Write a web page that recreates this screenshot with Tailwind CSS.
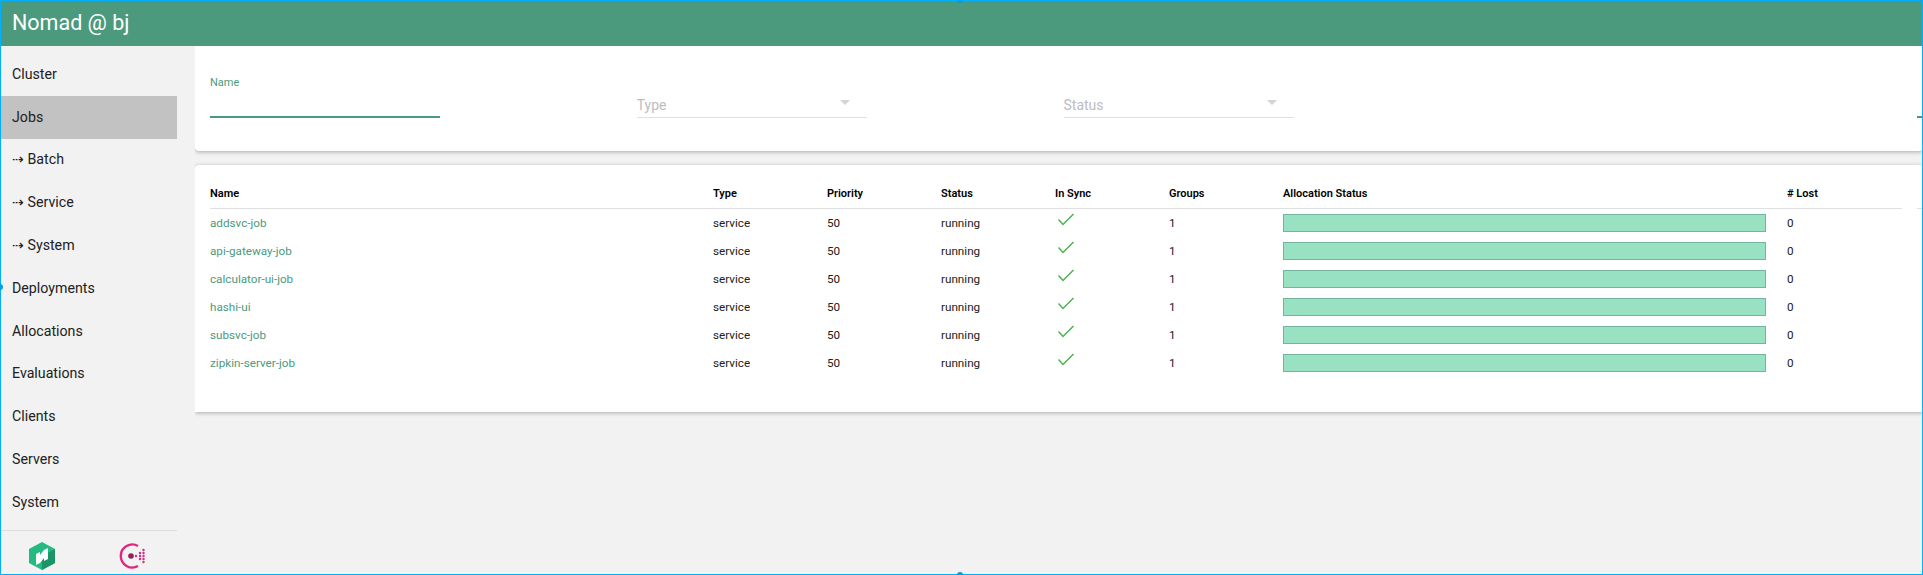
<!DOCTYPE html>
<html>
<head>
<meta charset="utf-8">
<script src="https://cdn.jsdelivr.net/npm/@tailwindcss/browser@4"></script>
</head>
<body class="relative h-[575px] w-[1923px] overflow-hidden bg-[#f2f2f2] font-['Roboto',sans-serif] text-[#212121]">
<header class="relative z-10 ml-px mt-px flex h-[45px] items-center bg-[#4b9a7d] pl-[11px] text-[21.5px] text-white">Nomad @ bj</header>
<div class="flex h-[529px]">
  <nav class="ml-px flex w-[194px] shrink-0 flex-col">
    <div class="flex h-[484px] w-[176px] flex-col pt-[7px] text-[14.2px]">
      <a class="flex h-[42.8px] items-center pl-[11px]">Cluster</a>
      <a class="flex h-[42.8px] items-center bg-[#c2c2c2] pl-[11px]">Jobs</a>
      <a class="flex h-[42.8px] items-center pl-[11px]">⇢ Batch</a>
      <a class="flex h-[42.8px] items-center pl-[11px]">⇢ Service</a>
      <a class="flex h-[42.8px] items-center pl-[11px]">⇢ System</a>
      <a class="flex h-[42.8px] items-center pl-[11px]">Deployments</a>
      <a class="flex h-[42.8px] items-center pl-[11px]">Allocations</a>
      <a class="flex h-[42.8px] items-center pl-[11px]">Evaluations</a>
      <a class="flex h-[42.8px] items-center pl-[11px]">Clients</a>
      <a class="flex h-[42.8px] items-center pl-[11px]">Servers</a>
      <a class="flex h-[42.8px] items-center pl-[11px]">System</a>
    </div>
    <div class="flex h-[45px] w-[176px] border-t border-[#dcdcdc]">
      <svg class="ml-[28px] mt-[11px]" width="26" height="28" viewBox="0 0 26 28"><path d="M13 0 26 7v14l-13 7-13-7V7z" fill="#25ba81"/><path d="M13 14 26 7v14l-13 7z" fill="#1d9467"/><path d="M7 12 11 10V13L15 8 19 6V17L15 19V16L11 21 7 23z" fill="#fff"/></svg>
      <svg class="ml-[64px] mt-[11px]" width="28" height="28" viewBox="0 0 28 28"><path d="M19 4A11.500 11.500 0 1 0 19 24" fill="none" stroke="#e0267f" stroke-width="2.400"/><circle cx="12" cy="14" r="2.800" fill="#961d59"/><g fill="#e0267f"><circle cx="17" cy="14" r="1.200"/><circle cx="21" cy="11" r="1.200"/><circle cx="21" cy="14" r="1.200"/><circle cx="21" cy="17" r="1.200"/><circle cx="24.500" cy="8" r="1.200"/><circle cx="24.500" cy="11" r="1.200"/><circle cx="24.500" cy="14" r="1.200"/><circle cx="24.500" cy="17" r="1.200"/><circle cx="24.500" cy="20" r="1.200"/></g></svg>
    </div>
  </nav>
  <main class="min-w-0 flex-1 overflow-hidden pb-2">
    <section class="grid h-[105px] grid-cols-[repeat(5,426.750px)] rounded-b-sm bg-white pl-[15px] shadow-[0_1px_4px_rgba(0,0,0,0.3)]">
      <div class="w-[230px]">
        <div class="pt-[31px] text-[11px] leading-[12px] text-[#4b9a7d]">Name</div>
        <div class="mt-[27px] h-[2px] bg-[#4b9a7d]"></div>
      </div>
      <div class="w-[230px] pt-[49px]">
        <div class="flex h-[23px] items-center justify-between border-b border-[#e0e0e0] pb-[2px] text-[14px] leading-none text-[#bdbdbd]"><span>Type</span><span class="mb-[6px] mr-[17px] h-0 w-0 border-x-[5px] border-t-[5px] border-x-transparent border-t-[#d4d4d4]"></span></div>
      </div>
      <div class="w-[230px] pt-[49px]">
        <div class="flex h-[23px] items-center justify-between border-b border-[#e0e0e0] pb-[2px] text-[14px] leading-none text-[#bdbdbd]"><span>Status</span><span class="mb-[6px] mr-[17px] h-0 w-0 border-x-[5px] border-t-[5px] border-x-transparent border-t-[#d4d4d4]"></span></div>
      </div>
      <div></div>
      <div class="pt-[70px]"><div class="h-[2px] bg-[#4b9a7d]"></div></div>
    </section>
    <section class="mt-[14px] h-[247px] rounded-t-sm bg-white pl-[15px] pt-[15px] text-[11.7px] shadow-[0_1px_4px_rgba(0,0,0,0.3)]">
      <div class="flex w-[1800px] gap-[15px]">
        <div class="grid h-[29px] w-[1692px] shrink-0 grid-cols-[503px_114px_114px_114px_114px_114px_504px_115px] items-center border-b border-[#e0e0e0] pt-[1px] text-[11px] font-semibold text-black">
          <div>Name</div><div>Type</div><div>Priority</div><div>Status</div><div>In Sync</div><div>Groups</div><div>Allocation Status</div><div># Lost</div>
        </div>
        <div class="h-[29px] flex-1 border-b border-[#e0e0e0]"></div>
      </div>
      <div class="w-[1692px] pt-[1px]">
        <div class="grid h-[28px] grid-cols-[503px_114px_114px_114px_114px_114px_504px_115px] items-center">
          <a class="text-[#4b9a7d]">addsvc-job</a><div>service</div><div>50</div><div>running</div>
          <svg class="mb-[10px] ml-[3px]" width="16" height="13" viewBox="0 0 16 13"><path d="M.5 6.500 5 11.500 15.500 1" fill="none" stroke="#4caf50" stroke-width="1.500"/></svg>
          <div>1</div><div class="-mt-[2px] h-[18px] w-[483px] border border-[#75b59f] bg-[#98e2c3]"></div><div>0</div>
        </div>
        <div class="grid h-[28px] grid-cols-[503px_114px_114px_114px_114px_114px_504px_115px] items-center">
          <a class="text-[#4b9a7d]">api-gateway-job</a><div>service</div><div>50</div><div>running</div>
          <svg class="mb-[10px] ml-[3px]" width="16" height="13" viewBox="0 0 16 13"><path d="M.5 6.500 5 11.500 15.500 1" fill="none" stroke="#4caf50" stroke-width="1.500"/></svg>
          <div>1</div><div class="-mt-[2px] h-[18px] w-[483px] border border-[#75b59f] bg-[#98e2c3]"></div><div>0</div>
        </div>
        <div class="grid h-[28px] grid-cols-[503px_114px_114px_114px_114px_114px_504px_115px] items-center">
          <a class="text-[#4b9a7d]">calculator-ui-job</a><div>service</div><div>50</div><div>running</div>
          <svg class="mb-[10px] ml-[3px]" width="16" height="13" viewBox="0 0 16 13"><path d="M.5 6.500 5 11.500 15.500 1" fill="none" stroke="#4caf50" stroke-width="1.500"/></svg>
          <div>1</div><div class="-mt-[2px] h-[18px] w-[483px] border border-[#75b59f] bg-[#98e2c3]"></div><div>0</div>
        </div>
        <div class="grid h-[28px] grid-cols-[503px_114px_114px_114px_114px_114px_504px_115px] items-center">
          <a class="text-[#4b9a7d]">hashi-ui</a><div>service</div><div>50</div><div>running</div>
          <svg class="mb-[10px] ml-[3px]" width="16" height="13" viewBox="0 0 16 13"><path d="M.5 6.500 5 11.500 15.500 1" fill="none" stroke="#4caf50" stroke-width="1.500"/></svg>
          <div>1</div><div class="-mt-[2px] h-[18px] w-[483px] border border-[#75b59f] bg-[#98e2c3]"></div><div>0</div>
        </div>
        <div class="grid h-[28px] grid-cols-[503px_114px_114px_114px_114px_114px_504px_115px] items-center">
          <a class="text-[#4b9a7d]">subsvc-job</a><div>service</div><div>50</div><div>running</div>
          <svg class="mb-[10px] ml-[3px]" width="16" height="13" viewBox="0 0 16 13"><path d="M.5 6.500 5 11.500 15.500 1" fill="none" stroke="#4caf50" stroke-width="1.500"/></svg>
          <div>1</div><div class="-mt-[2px] h-[18px] w-[483px] border border-[#75b59f] bg-[#98e2c3]"></div><div>0</div>
        </div>
        <div class="grid h-[28px] grid-cols-[503px_114px_114px_114px_114px_114px_504px_115px] items-center">
          <a class="text-[#4b9a7d]">zipkin-server-job</a><div>service</div><div>50</div><div>running</div>
          <svg class="mb-[10px] ml-[3px]" width="16" height="13" viewBox="0 0 16 13"><path d="M.5 6.500 5 11.500 15.500 1" fill="none" stroke="#4caf50" stroke-width="1.500"/></svg>
          <div>1</div><div class="-mt-[2px] h-[18px] w-[483px] border border-[#75b59f] bg-[#98e2c3]"></div><div>0</div>
        </div>
      </div>
    </section>
  </main>
</div>
<div class="pointer-events-none absolute inset-0 z-20 border border-[#00b0ff]"></div>
<div class="absolute left-[957px] top-[-3px] z-20 h-[6px] w-[6px] rounded-full bg-[#00a0e0]"></div>
<div class="absolute left-[957px] bottom-[-3px] z-20 h-[6px] w-[6px] rounded-full bg-[#00a0e0]"></div>
<div class="absolute left-[-3px] top-[284px] z-20 h-[6px] w-[6px] rounded-full bg-[#00a0e0]"></div>
</body>
</html>
